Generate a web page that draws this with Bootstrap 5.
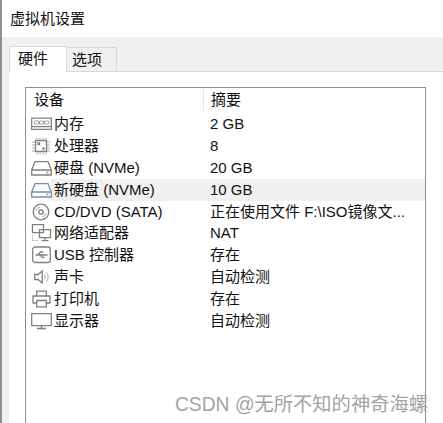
<!DOCTYPE html>
<html lang="en">
<head>
    <meta charset="UTF-8">
    <meta name="viewport" content="width=device-width, initial-scale=1.0">
    <title>虚拟机设置</title>
    <link href="https://cdn.jsdelivr.net/npm/bootstrap@5.3.0/dist/css/bootstrap.min.css" rel="stylesheet">
    <style>
        body { background: #fff; color: #111; height: 423px; overflow: hidden; font-family: "Liberation Sans", "Noto Sans CJK SC", sans-serif; font-size: 15px; line-height: 22px; }
        .win { height: 423px; border-left: 2px solid #8b8f96; }
        .win-title { height: 37px; padding: 8px 0 0 8px; }
        .win-body { height: 386px; background: #f0f0f0; padding: 9px 0 0 7px; }
        .tab-row { height: 25px; align-items: flex-end; }
        .tab-on { width: 58px; height: 26px; background: #fff; border: 1px solid #d9d9d9; border-bottom: 0; padding: 1px 0 0 8px; position: relative; z-index: 1; margin-bottom: -1px; }
        .tab-off { width: 50px; height: 24px; background: #f0f0f0; border: 1px solid #d9d9d9; border-left: 0; border-bottom: 0; padding: 1px 0 0 5px; }
        .tab-pane-box { height: 352px; background: #fff; border-top: 1px solid #d9d9d9; padding: 15px 17px 0 16px; }
        .dev-list { height: 337px; border: 1px solid #8b8f96; border-bottom: 0; padding-top: 1px; }
        .dev-row { height: 21.9px; }
        .dev-head { height: 22px; margin-bottom: 2px; }
        .cell-a { width: 177px; padding-left: 8px; flex: none; }
        .cell-b { padding-left: 7px; flex: 1; white-space: nowrap; }
        .dev-head .cell-b { border-left: 1px solid #e5e5e5; }
        .dev-row .cell-a { padding-left: 5px; display: flex; align-items: center; white-space: nowrap; }
        .dev-row svg { width: 21px; height: 18px; flex: none; margin-right: 2px; fill: none; stroke: #808080; stroke-width: 1.3; }
        .dev-row svg.disk-sel { stroke: #6f90ad; }
        .dev-row svg .thin { stroke-width: 1; stroke: #a8a8a8; }
        .row-sel { background: linear-gradient(to right, #fff 25px, #f0f0f0 25px); }
        .wm { position: absolute; right: 15px; bottom: 7px; color: #a3a3a3; font-size: 19.3px; line-height: 22px; white-space: nowrap; }
    </style>
</head>
<body>
<div class="win">
    <div class="win-title">虚拟机设置</div>
    <div class="win-body">
        <div class="d-flex tab-row">
            <div class="tab-on">硬件</div>
            <div class="tab-off">选项</div>
        </div>
        <div class="tab-pane-box">
            <div class="dev-list">
                <div class="d-flex dev-head"><div class="cell-a">设备</div><div class="cell-b">摘要</div></div>
                <div class="d-flex dev-row">
                    <div class="cell-a"><svg viewBox="0 0 21 18"><path d="M.7 3.200h19.600v11.100H.7zM.7 11.700h19.600"/><path class="thin" d="M3.500 6h4v3h-4zM8.500 6h4v3h-4zM13.500 6h4v3h-4z"/></svg>内存</div>
                    <div class="cell-b">2 GB</div>
                </div>
                <div class="d-flex dev-row">
                    <div class="cell-a"><svg viewBox="0 0 21 18"><path d="M4.500 3.500h11v11h-11z"/><path class="thin" d="M6 .5v2M9 .5v2M12 .5v2M15 .5v2M6 15.500v2M9 15.500v2M12 15.500v2M15 15.500v2M1 5h3M1 8h3M1 11h3M1 14h3M16 5h3M16 8h3M16 11h3M16 14h3"/><path d="M7 6h1.500v1.500H7zM12 11h1v1h-1z" fill="#666"/></svg>处理器</div>
                    <div class="cell-b">8</div>
                </div>
                <div class="d-flex dev-row">
                    <div class="cell-a"><svg viewBox="0 0 21 18"><path d="M.7 11 4 2.700h13l3.300 8.300v5H.7zM.7 11h19.600M15.500 13.500h2"/></svg>硬盘 (NVMe)</div>
                    <div class="cell-b">20 GB</div>
                </div>
                <div class="d-flex dev-row row-sel">
                    <div class="cell-a"><svg class="disk-sel" viewBox="0 0 21 18"><path d="M.7 11 4 2.700h13l3.300 8.300v5H.7zM.7 11h19.600M15.500 13.500h2"/></svg>新硬盘 (NVMe)</div>
                    <div class="cell-b">10 GB</div>
                </div>
                <div class="d-flex dev-row">
                    <div class="cell-a"><svg viewBox="0 0 21 18"><circle cx="10" cy="9" r="7.800"/><circle cx="10" cy="9" r="2.200"/><path class="thin" d="M5 8a5 5 0 0 1 4-4M15 10a5 5 0 0 1-4 4"/></svg>CD/DVD (SATA)</div>
                    <div class="cell-b">正在使用文件 F:\ISO镜像文...</div>
                </div>
                <div class="d-flex dev-row">
                    <div class="cell-a"><svg viewBox="0 0 21 18"><path d="M1.500 .7h11v8h-11zM8.500 5.700h11v8h-11zM14 13.700v2.500M10.500 16.700h7"/><path class="thin" d="M1.500 11.500v5h6" stroke-dasharray="1.500 1"/></svg>网络适配器</div>
                    <div class="cell-b">NAT</div>
                </div>
                <div class="d-flex dev-row">
                    <div class="cell-a"><svg viewBox="0 0 21 18"><rect x="1.700" y="1" width="17.600" height="15.500" rx="2.500"/><path d="M4.500 9h12M6.500 9l3-3h3M9 9l2.500 2.500h2"/></svg>USB 控制器</div>
                    <div class="cell-b">存在</div>
                </div>
                <div class="d-flex dev-row">
                    <div class="cell-a"><svg viewBox="0 0 21 18"><path d="M3.700 6.500h3.500l4-3.500v12l-4-3.500H3.700z"/><path class="thin" d="M13.500 6.500a4 4 0 0 1 0 5M15.500 4.500a7 7 0 0 1 0 9"/></svg>声卡</div>
                    <div class="cell-b">自动检测</div>
                </div>
                <div class="d-flex dev-row">
                    <div class="cell-a"><svg viewBox="0 0 21 18"><path d="M5.700 6V1.200h9.600V6M5.700 13H2V6h17v7h-3.700M5.700 10.500h9.600v6.300H5.700z"/></svg>打印机</div>
                    <div class="cell-b">存在</div>
                </div>
                <div class="d-flex dev-row">
                    <div class="cell-a"><svg viewBox="0 0 21 18"><path d="M.7 1.700h19.600v12H.7zM6 16.500h9M10.500 13.700v2.800"/></svg>显示器</div>
                    <div class="cell-b">自动检测</div>
                </div>
            </div>
        </div>
    </div>
</div>
<div class="wm">CSDN @无所不知的神奇海螺</div>
</body>
</html>
